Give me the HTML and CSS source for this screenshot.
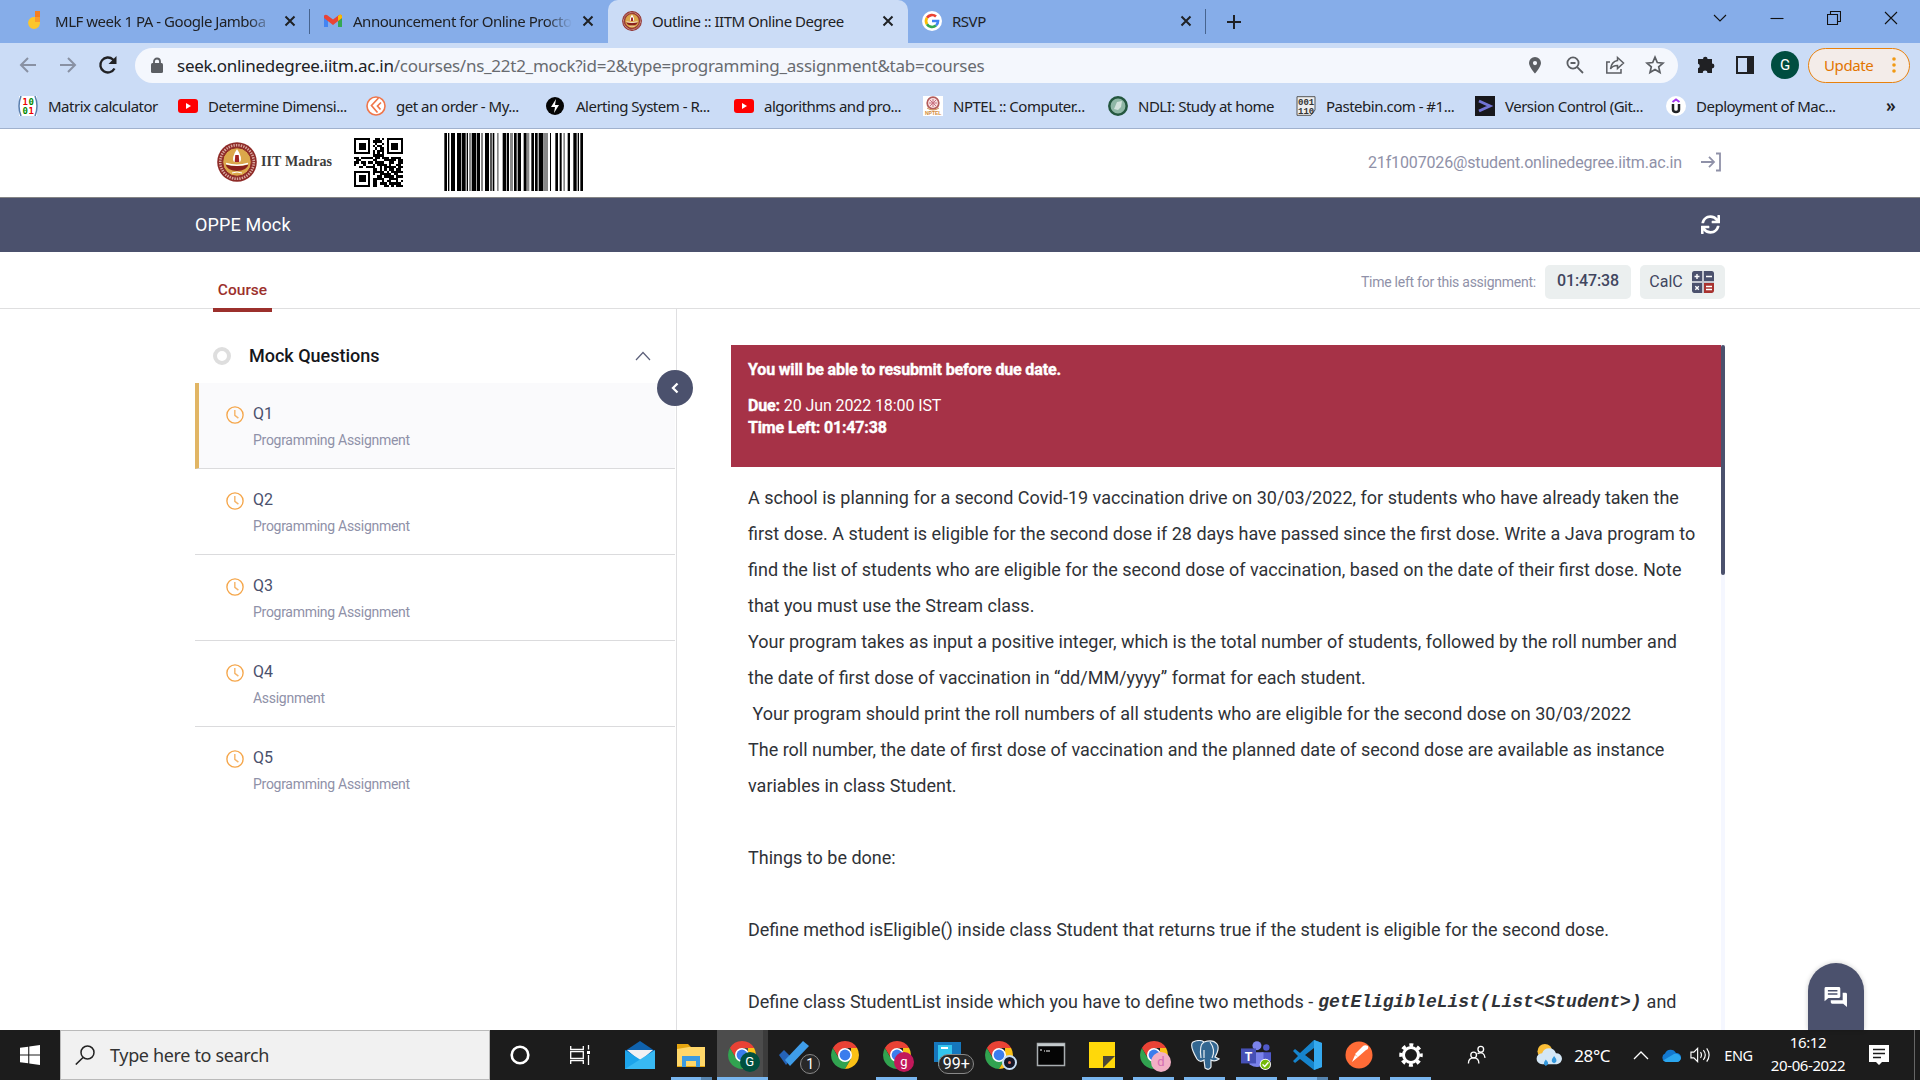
FILE: index.html
```html
<!DOCTYPE html>
<html lang="en">
<head>
<meta charset="utf-8">
<title>Outline :: IITM Online Degree</title>
<link rel="stylesheet" href="styles.css">
</head>
<body>
<svg width="0" height="0" class="defs" aria-hidden="true">
  <defs>
    <symbol id="close" viewBox="0 0 12 12"><path d="M1.5 1.5l9 9M10.5 1.5l-9 9" stroke="#1f2125" stroke-width="2"/></symbol>
    <symbol id="youtube" viewBox="0 0 20 20"><rect y="3" width="20" height="14" rx="3" fill="#f00"/><path d="M8 7l5 3-5 3z" fill="#fff"/></symbol>
    <symbol id="seal" viewBox="0 0 40 40"><circle cx="20" cy="20" r="19.8" fill="#8e2a27"/><circle cx="20" cy="20" r="16.8" fill="none" stroke="#d8a79f" stroke-width="2.6" stroke-dasharray="1.4 1.1"/><circle cx="20" cy="20" r="14.3" fill="#dba74b" stroke="#8e2a27"/><path d="M8.500 22.500q11.500 3 23 0q-2 6.500-11.500 6.500T8.500 22.500z" fill="#8a211c"/><path d="M9 21.500q11 3.500 22 0" fill="none" stroke="#fff" stroke-width="1.400"/><path d="M20 7q-6 9-3 13h6q3-4-3-13z" fill="#fff"/><path d="M18.300 13h3.400l.6 7h-4.600z" fill="#a02222"/><path d="M15 31q5-2 10 0" stroke="#fff" fill="none"/></symbol>
    <symbol id="chrome" viewBox="0 0 30 30"><path d="M15 1A14 14 0 0 1 27.200 8H15L9 18 2.900 8A14 14 0 0 1 15 1z" fill="#e94235"/><path d="M2.900 8A14 14 0 0 0 15 29l6-10.500L9 18.500z" fill="#31a350"/><path d="M27.100 8A14 14 0 0 1 15 29l6.100-10.500L21 8z" fill="#fbc116"/><circle cx="15" cy="15" r="7" fill="#fff"/><circle cx="15" cy="15" r="5.400" fill="#3b7ded"/></symbol>
    <symbol id="clock" viewBox="0 0 20 20"><circle cx="10" cy="10" r="9" fill="none" stroke="#f5a64a" stroke-width="1.500"/><path d="M9.800 4.500v6l4 3" fill="none" stroke="#f5b56a" stroke-width="1.600"/></symbol>
  </defs>
</svg>

<header class="browser">
  <div class="tabstrip">
    <div class="tab tab-a"><svg class="fav" viewBox="0 0 20 20"><path d="M10 0h5v10h-5z" fill="#f57f20"/><path d="M10 6v5h5a6 6 0 1 1-5-5z" fill="#fbc62c"/><path d="M10 6h5v5h-5z" fill="#fa9c2b"/></svg><span class="label fade">MLF week 1 PA - Google Jamboa</span><svg class="x"><use href="#close"/></svg></div>
    <i class="sep"></i>
    <div class="tab tab-b"><svg class="fav" viewBox="0 0 20 20"><path d="M1 4v12h4V8z" fill="#4285f4"/><path d="M19 4v12h-4V8z" fill="#34a853"/><path d="M1 5.500Q1 3 4 4l6 4.500L16 4q3-1 3 1.500L19 7l-9 7-9-7z" fill="#ea4335"/><path d="M15 5l2-1.400q2-.3 2 2V7l-4 3z" fill="#fbbc04"/></svg><span class="label fade">Announcement for Online Procto</span><svg class="x"><use href="#close"/></svg></div>
    <div class="tab active"><svg class="fav"><use href="#seal"/></svg><span class="label">Outline :: IITM Online Degree</span><svg class="x"><use href="#close"/></svg></div>
    <div class="tab tab-d"><svg class="fav" viewBox="0 0 20 20"><circle cx="10" cy="10" r="10" fill="#fff"/><g fill="none" stroke-width="2.700"><path d="M5 6.800A6 6 0 0 1 14 5.500" stroke="#ea4335"/><path d="M5 13.200a6 6 0 0 1 0-6.400" stroke="#fbbc05"/><path d="M14 14.500a6 6 0 0 1-9-1.300" stroke="#34a853"/><path d="M10 10h6q0 3-2 4.500" stroke="#4285f4"/></g></svg><span class="label">RSVP</span><svg class="x"><use href="#close"/></svg></div>
    <i class="sep"></i>
    <svg class="plus" viewBox="0 0 16 16"><path d="M8 1v14M1 8h14" stroke="#1f2125" stroke-width="2"/></svg>
    <div class="wincontrols">
      <svg viewBox="0 0 14 14"><path d="M1 4l6 6 6-6"/></svg>
      <svg viewBox="0 0 14 14"><path d="M.5 7.500h13"/></svg>
      <svg viewBox="0 0 14 14"><path d="M.5 3.500h10v10H.5zM3.500 3.500v-3h10v10h-3"/></svg>
      <svg viewBox="0 0 14 14"><path d="M1 1l12 12M13 1L1 13"/></svg>
    </div>
  </div>

  <div class="toolbar">
    <svg class="nav" viewBox="0 0 20 20"><path d="M18 10H3M10 3l-7 7 7 7" fill="none" stroke="#8991a3" stroke-width="2"/></svg>
    <svg class="nav" viewBox="0 0 20 20"><path d="M2 10h15M10 3l7 7-7 7" fill="none" stroke="#8991a3" stroke-width="2"/></svg>
    <svg class="nav" viewBox="0 0 20 20"><path d="M16.500 13.500A7.500 7.500 0 1 1 15 4.500l2 2" fill="none" stroke="#202124" stroke-width="2.300"/><path d="M18.500 1v8h-8z" fill="#202124"/></svg>
    <div class="omnibox">
      <svg class="lock" viewBox="0 0 12 16"><rect y="6" width="12" height="10" rx="1.500" fill="#5b5e63"/><path d="M3 7V4.500a3 3 0 0 1 6 0V7" fill="none" stroke="#5b5e63" stroke-width="1.800"/></svg>
      <span class="url"><b>seek.onlinedegree.iitm.ac.in</b>/courses/ns_22t2_mock?id=2&amp;type=programming_assignment&amp;tab=courses</span>
      <div class="actions">
        <svg viewBox="0 0 20 20"><path d="M10 2a6 6 0 0 0-6 6c0 4 6 10.500 6 10.500S16 12 16 8a6 6 0 0 0-6-6zm0 4a2 2 0 1 1 0 4.200A2 2 0 0 1 10 6z" fill="#5b5e63"/></svg>
        <svg viewBox="0 0 20 20"><g fill="none" stroke="#5b5e63" stroke-width="1.800"><circle cx="8" cy="8" r="5.600"/><path d="M5.500 8h5M12.200 12.200L18 18"/></g></svg>
        <svg viewBox="0 0 20 20"><g fill="none" stroke="#5b5e63" stroke-width="1.500"><path d="M5 7H1.800v11H16v-4"/><path d="M12.500 2.500L18.500 8l-6 5.500v-3q-5 0-7 3.500 1-7.500 7-8.500z"/></g></svg>
        <svg viewBox="0 0 20 20"><path d="M10 2.200l2.300 5.300 5.700.6-4.300 3.800 1.300 5.700-5-3-5 3 1.300-5.700L2 8.100l5.700-.6z" fill="none" stroke="#5b5e63" stroke-width="1.700"/></svg>
      </div>
    </div>
    <svg class="ext" viewBox="0 0 20 20"><path d="M7 4a2.300 2.300 0 0 1 4.600 0H16v4.600a2.400 2.400 0 0 1 0 4.800V18h-4.500a2.400 2.400 0 0 0-4.800 0H2v-4.700a2.400 2.400 0 0 0 0-4.600V4z" fill="#202124"/></svg>
    <svg class="panel" viewBox="0 0 18 18"><path d="M1 1h16v16H1z" fill="none" stroke="#202124" stroke-width="2"/><path d="M11 1h6v16h-6z" fill="#202124"/></svg>
    <span class="avatar">G</span>
    <span class="update">Update <svg viewBox="0 0 4 18"><circle cx="2" cy="3" r="1.800"/><circle cx="2" cy="9" r="1.800"/><circle cx="2" cy="15" r="1.800"/></svg></span>
  </div>

  <div class="bookmarks">
    <div><svg viewBox="0 0 20 20"><path d="M1 0h18v20H1z" fill="#fff"/><path d="M3 0Q-1 10 3 20M17 0q4 10 0 20" fill="none" stroke="#5a7fae" stroke-width="1.500"/><g class="matrix"><text x="4.500" y="8.500" fill="#e00">1</text><text x="10.500" y="8.500" fill="#080">0</text><text x="4.500" y="17.500" fill="#080">0</text><text x="10.500" y="17.500" fill="#e00">1</text></g></svg><span>Matrix calculator</span></div>
    <div><svg><use href="#youtube"/></svg><span>Determine Dimensi...</span></div>
    <div><svg viewBox="0 0 20 20"><circle cx="10" cy="10" r="9" fill="#fff" stroke="#f0764a" stroke-width="1.600"/><path d="M12.500 2L5.500 9.500l6 7M15 6.500l-3.500 3.500 3 3.500" fill="none" stroke="#f0764a" stroke-width="1.700"/></svg><span>get an order - My...</span></div>
    <div><svg viewBox="0 0 20 20"><circle cx="9" cy="10" r="9" fill="#050505"/><path d="M10 3l-5 8h4l-1 6 5-8H9z" fill="#fff"/></svg><span>Alerting System - R...</span></div>
    <div><svg><use href="#youtube"/></svg><span>algorithms and pro...</span></div>
    <div><svg viewBox="0 0 20 20"><path d="M0 0h20v20H0z" fill="#fff"/><circle cx="10" cy="7" r="5.800" fill="#f8dfe0" stroke="#b35c5c" stroke-width="1.700"/><path d="M10 3v8M6 7h8M7 4l6 6M13 4l-6 6" stroke="#c87180"/><path d="M4 12q6 4 12 0" stroke="#d09050" fill="none"/><text x="2" y="19" class="nptel">NPTEL</text></svg><span>NPTEL :: Computer...</span></div>
    <div><svg viewBox="0 0 20 20"><circle cx="10" cy="10" r="8.700" fill="#8fb7a6" stroke="#24573f" stroke-width="2.500"/><path d="M6 13l3-7 5-1-1 6-3 3z" fill="#d2e2dc"/></svg><span>NDLI: Study at home</span></div>
    <div><svg viewBox="0 0 20 20"><path d="M1 .7h18V14l-4 5.300H1z" fill="#eee" stroke="#555"/><text x="2" y="9" class="bits">001</text><text x="2" y="17.500" class="bits">110</text></svg><span>Pastebin.com - #1...</span></div>
    <div><svg viewBox="0 0 20 20"><path d="M0 0h20v20H0z" fill="#18181c"/><path d="M4 5l11 5-11 5" fill="none" stroke="#7274d4" stroke-width="2.800"/></svg><span>Version Control (Git...</span></div>
    <div><svg viewBox="0 0 20 20"><circle cx="10" cy="10" r="10" fill="#fff"/><path d="M6.500 6L10 3.500 13.500 6" fill="none" stroke="#a435f0" stroke-width="2"/><path d="M7 8v5.500q0 2.500 3 2.500t3-2.500V8" fill="none" stroke="#202124" stroke-width="2.500"/></svg><span>Deployment of Mac...</span></div>
    <b>»</b>
  </div>
</header>

<main class="page">
  <div class="brandbar">
    <svg class="seal"><use href="#seal"/></svg>
    <span class="brand">IIT Madras</span>
    <svg class="qr" id="qr" viewBox="0 0 21 21" shape-rendering="crispEdges"></svg>
    <svg class="barcode" id="barcode" viewBox="0 0 417 58" preserveAspectRatio="none"></svg>
    <span class="email">21f1007026@student.onlinedegree.iitm.ac.in</span>
    <svg class="logout" viewBox="0 0 20 20"><path d="M0 10h12M8 4.800l5 5.200-5 5.200M15 1.500h4v17h-4" fill="none" stroke="#8f91a8" stroke-width="1.800"/></svg>
  </div>
  <div class="titlebar">
    <span>OPPE Mock</span>
    <svg viewBox="0 0 512 512"><path fill="#fff" d="M440.650 12.570l4 82.770A247.160 247.160 0 0 0 255.830 8C134.730 8 33.910 94.920 12.290 209.820A12 12 0 0 0 24.090 224h49.050a12 12 0 0 0 11.670-9.260 175.910 175.910 0 0 1 317-56.940l-101.460-4.860a12 12 0 0 0-12.570 12v47.410a12 12 0 0 0 12 12H500a12 12 0 0 0 12-12V12a12 12 0 0 0-12-12h-47.370a12 12 0 0 0-11.980 12.570zM255.830 432a175.610 175.610 0 0 1-146-77.800l101.800 4.870a12 12 0 0 0 12.570-12v-47.400a12 12 0 0 0-12-12H12a12 12 0 0 0-12 12V500a12 12 0 0 0 12 12h47.350a12 12 0 0 0 12-12.600l-4.150-82.570A247.170 247.170 0 0 0 255.830 504c121.110 0 221.930-86.920 243.550-201.820a12 12 0 0 0-11.800-14.180h-49.050a12 12 0 0 0-11.670 9.260A175.860 175.860 0 0 1 255.830 432z"/></svg>
  </div>
  <div class="coursebar">
    <span class="course">Course</span>
    <span class="timelabel">Time left for this assignment:</span>
    <span class="pill time">01:47:38</span>
    <span class="pill calc">CalC <svg viewBox="0 0 22 22"><path d="M0 0h22v22H0z" fill="#c3c6cf"/><path d="M2 0h8v10H0V2q0-2 2-2zM12 0h8q2 0 2 2v8H12zM0 12h10v10H2q-2 0-2-2z" fill="#4b516d"/><path d="M12 12h10v8q0 2-2 2h-8z" fill="#a8322f"/><path d="M5 3v5M2.500 5.500h5M14 5.500h6M3.300 15.300l3.500 3.500M6.800 15.300l-3.500 3.500M14 15.500h6M14 18.500h6" stroke="#fff" stroke-width="1.400"/></svg></span>
  </div>

  <div class="columns">
    <aside class="outline">
      <div class="section"><i class="ring"></i><span>Mock Questions</span><svg viewBox="0 0 16 10"><path d="M1 9l7-7.500L15 9" fill="none" stroke="#5c607a" stroke-width="1.200"/></svg></div>
      <div class="item selected"><svg><use href="#clock"/></svg><div><p>Q1</p><small>Programming Assignment</small></div></div>
      <div class="item"><svg><use href="#clock"/></svg><div><p>Q2</p><small>Programming Assignment</small></div></div>
      <div class="item"><svg><use href="#clock"/></svg><div><p>Q3</p><small>Programming Assignment</small></div></div>
      <div class="item"><svg><use href="#clock"/></svg><div><p>Q4</p><small>Assignment</small></div></div>
      <div class="item"><svg><use href="#clock"/></svg><div><p>Q5</p><small>Programming Assignment</small></div></div>
      <button class="collapse" aria-label="Collapse"><svg viewBox="0 0 10 12"><path d="M7.500 1.500L3 6l4.500 4.500" fill="none" stroke="#fff" stroke-width="2.300"/></svg></button>
    </aside>
    <section class="content">
      <div class="scroller">
        <div class="banner">
          <p class="notice"><b>You will be able to resubmit before due date.</b></p>
          <p><b>Due:</b> 20 Jun 2022 18:00 IST</p>
          <p><b>Time Left: 01:47:38</b></p>
        </div>
        <div class="question">
          <p>A school is planning for a second Covid-19 vaccination drive on 30/03/2022, for students who have already taken the
first dose. A student is eligible for the second dose if 28 days have passed since the first dose. Write a Java program to
find the list of students who are eligible for the second dose of vaccination, based on the date of their first dose. Note
that you must use the Stream class.</p>
          <p>Your program takes as input a positive integer, which is the total number of students, followed by the roll number and
the date of first dose of vaccination in “dd/MM/yyyy” format for each student.</p>
          <p> Your program should print the roll numbers of all students who are eligible for the second dose on 30/03/2022</p>
          <p class="gap">The roll number, the date of first dose of vaccination and the planned date of second dose are available as instance
variables in class Student.</p>
          <p class="gap">Things to be done:</p>
          <p class="gap">Define method isEligible() inside class Student that returns true if the student is eligible for the second dose.</p>
          <p class="mixed"><span>Define class StudentList inside which you have to define two methods -</span><code>getEligibleList(List&lt;Student&gt;)</code><span>and</span></p>
        </div>
      </div>
      <div class="track"><i></i></div>
    </section>
    <button class="chat" aria-label="Chat"><svg viewBox="0 0 24 22"><path d="M1.500 0H15q1.500 0 1.500 1.500V10q0 1.500-1.500 1.500H4L0 15V1.500Q0 0 1.500 0z" fill="#fff"/><path d="M19 6h3q1.500 0 1.500 1.500V21l-4-3.500H8Q6.500 17.500 6.500 16v-2H19z" fill="#fff"/><path d="M3.500 4h10M3.500 7.300h10" stroke="#4b516d" stroke-width="1.500"/></svg></button>
  </div>
</main>

<footer class="taskbar">
  <svg class="start" viewBox="0 0 20 20"><path d="M0 2.800l8.200-1.100v7.700H0zM9.300 1.500L20 0v9.400H9.300zM0 10.500h8.200v7.800L0 17.200zM9.300 10.500H20V20L9.300 18.500z" fill="#fff"/></svg>
  <div class="search"><svg viewBox="0 0 20 20"><circle cx="12.500" cy="7.500" r="6.500" fill="none" stroke="#222" stroke-width="1.500"/><path d="M8 12.500L.8 19.500" stroke="#222" stroke-width="1.600"/></svg><span>Type here to search</span></div>
  <div class="sys"><svg viewBox="0 0 20 20"><circle cx="10" cy="10" r="8.300" fill="none" stroke="#fff" stroke-width="2.600"/></svg></div>
  <div class="sys"><svg viewBox="0 0 20 20"><path d="M.7 1v3.300h12.600V1M.7 19v-3.300h12.600V19M.7 6.500h12.600v7H.7zM18.500 0v4.500M18.500 10v10" fill="none" stroke="#fff" stroke-width="1.300"/><path d="M17 6h3v3h-3z" fill="#fff"/></svg></div>
  <div class="apps">
    <div><svg viewBox="0 0 30 30"><path d="M0 11L15 1l15 10v18H0z" fill="#0f62ad"/><path d="M2 10h26L15 21z" fill="#f1f1f3"/><path d="M0 10l30 19H0z" fill="#1ca4eb"/><path d="M30 10L0 29h30z" fill="#38b9f3"/></svg></div>
    <div class="run split"><svg viewBox="0 0 30 30"><path d="M1 4h11l3 3h14v20H1z" fill="#e5a50f"/><path d="M1 9l12-2h16v19H1z" fill="#ffd769"/><path d="M6 27V16h18v11h-4v-6H10v6z" fill="#3c9be0"/></svg></div>
    <div class="run current"><svg><use href="#chrome"/></svg><b class="badge green">G</b></div>
    <div><svg viewBox="0 0 30 30"><path d="M0 15l5-5 8 8-6 7z" fill="#2563b8"/><path d="M6 20L24 1l6 5-19 20z" fill="#3f9de9"/></svg><b class="badge num">1</b></div>
    <div><svg><use href="#chrome"/></svg></div>
    <div class="run"><svg><use href="#chrome"/></svg><b class="badge pink">g</b></div>
    <div><svg viewBox="0 0 30 30"><path d="M1 2h27v20H1z" fill="#1677bd"/><path d="M5 5h14v21H5z" fill="#32c5ef"/><path d="M8 8h7" stroke="#fff" stroke-width="2"/></svg><b class="badge many">99+</b></div>
    <div><svg><use href="#chrome"/></svg><b class="badge dark"><i></i></b></div>
    <div><svg viewBox="0 0 30 30"><path d="M1.500 3.500h27v22h-27z" fill="#050505" stroke="#a8adb0" stroke-width="1.500"/><path d="M1.500 5h27" stroke="#c4cacc" stroke-width="2.500"/><path d="M4 10h2M8 11h1M10 11h4" stroke="#fff"/></svg></div>
    <div class="run"><svg viewBox="0 0 30 30"><path d="M2 2h26v26H2z" fill="#ffd80a"/><path d="M16 28V16h12z" fill="#4a4637"/></svg></div>
    <div class="run"><svg><use href="#chrome"/></svg><b class="badge rose">d</b></div>
    <div class="run"><svg viewBox="0 0 30 30"><path d="M3 2q7-3 11 0 9-3 13 2 3 4-2 13l4 2q-4 3-8 1v7q-2 4-6 1l-1-8q-4 3-7-1Q-1 5 3 2z" fill="#336791" stroke="#e8eef2" stroke-width="1.200"/><path d="M14 2q-5 3-3 16M20 2q6 8 2 16M14 10v8" fill="none" stroke="#e8eef2" stroke-width="1.200"/></svg></div>
    <div class="run"><svg class="teams" viewBox="0 0 32 30"><circle cx="17" cy="5" r="4.800" fill="#7b83eb"/><circle cx="27" cy="7" r="3.400" fill="#5059c9"/><path d="M22 12h10v9q-4 6-10 2z" fill="#5059c9"/><path d="M9 12h15v12q-5 7-15 1z" fill="#7b83eb"/><path d="M0 8h16v16H0z" fill="#4650b5"/><text x="4" y="21" class="teams-t">T</text><circle cx="26" cy="25" r="6" fill="#fff"/><circle cx="26" cy="25" r="5" fill="#75b80b"/><path d="M23 25l2.300 2.300 4-4.500" fill="none" stroke="#fff" stroke-width="1.500"/></svg></div>
    <div class="run split"><svg viewBox="0 0 30 30"><path d="M21 0L7 13 2 9 0 11l5 5-5 5 2 2 5-4 14 11 8-3V3zM21 8v14l-9-7z" fill="#1684cc"/><path d="M21 0l8 3v24l-8 3z" fill="#35a9ef"/></svg></div>
    <div class="run"><svg viewBox="0 0 30 30"><circle cx="15" cy="15" r="13.500" fill="#ff6c37"/><path d="M24 6q-4-2-6 1l-7 7 3 3 8-7q3-1 2-4zM11 15l-3 7 6-5" fill="#fff"/></svg></div>
    <div class="run"><svg viewBox="0 0 30 30"><circle cx="15" cy="15" r="10" fill="none" stroke="#fff" stroke-width="3.500" stroke-dasharray="3.930 3.930" stroke-dashoffset="2"/><circle cx="15" cy="15" r="7.500" fill="none" stroke="#fff" stroke-width="3"/></svg></div>
  </div>
  <svg class="people" viewBox="0 0 20 20"><g fill="none" stroke="#fff" stroke-width="1.400"><circle cx="7" cy="10" r="3"/><circle cx="14.500" cy="4" r="3"/><path d="M1.500 19q0-6 5.500-6t5.500 6M11 8.500q7-3 8 4.500"/></g></svg>
  <svg class="weather" viewBox="0 0 28 26"><circle cx="9" cy="9" r="8" fill="#f9bd37"/><path d="M6 23a6 6 0 0 1 0-12 8 8 0 0 1 15 0 6 6 0 0 1 1 12z" fill="#d4e7f6"/><path d="M10 18q5 5 0 7-4-2 0-7zM19 14q5 6 0 8-5-2 0-8z" fill="#3197dd"/></svg>
  <span class="temp">28°C</span>
  <svg class="up" viewBox="0 0 16 9"><path d="M1 8l7-7 7 7" fill="none" stroke="#fff" stroke-width="1.300"/></svg>
  <svg class="cloud" viewBox="0 0 20 13"><path d="M5 13a4.500 4.500 0 0 1-1-8.500 6 6 0 0 1 11-.5 4.500 4.500 0 0 1 1 9z" fill="#1379d0"/><path d="M2 11.500L13 5q5-1 7 4-1 4-4 4H5z" fill="#2ba6ee"/></svg>
  <svg class="speaker" viewBox="0 0 22 16"><path d="M1 5h3l4-4v14l-4-4H1zM11 5q2 3 0 6M14 3q4 5 0 10M17.500 1q5 7 0 14" fill="none" stroke="#fff" stroke-width="1.200"/></svg>
  <span class="lang">ENG</span>
  <div class="datetime"><span>16:12</span><span>20-06-2022</span></div>
  <svg class="notify" viewBox="0 0 20 20"><path d="M0 0h20v17h-7l-3 3-3-3H0z" fill="#fff"/><path d="M4 4.500h12M4 8.500h12M4 12.500h8" stroke="#1c1c1c" stroke-width="1.400"/></svg>
  <i class="peek"></i>
</footer>
<script src="codes.js"></script>
</body>
</html>
```
FILE: styles.css
```css
* { box-sizing: border-box; }
body { margin: 0; width: 1920px; height: 1080px; overflow: hidden; display: flex; flex-direction: column; background: #fff; font-family: Roboto, sans-serif; }
p { margin: 0; }
svg { flex: none; display: block; }
button { border: 0; padding: 0; }
.defs { position: absolute; }

/* browser chrome */
.browser { height: 129px; flex: none; background: #cbdcf6; border-bottom: 1px solid #a0b1cd; font-family: "Noto Sans", sans-serif; color: #202124; }
.tabstrip { height: 43px; background: #86ade9; display: flex; align-items: center; font-size: 15px; }
.tab { display: flex; align-items: center; height: 43px; padding-right: 13px; padding-bottom: 2px; white-space: nowrap; letter-spacing: -0.48px; }
.tab .fav { width: 20px; height: 20px; margin-right: 10px; }
.tab .label { flex: 1; }
.tab .x { width: 12px; height: 12px; margin-left: 10px; }
.fade { mask-image: linear-gradient(90deg, #000 88%, transparent); }
.tab-a { width: 309px; padding-left: 25px; }
.tab-b { width: 298px; padding-left: 13px; padding-right: 14px; }
.tab.active { width: 300px; padding-left: 14px; padding-right: 14px; background: #cbdcf6; border-radius: 10px 10px 0 0; }
.tab-d { width: 297px; padding-left: 14px; }
.sep { width: 1px; height: 25px; background: #47648f; }
.plus { width: 16px; height: 16px; margin-left: 20px; }
.wincontrols { display: flex; gap: 43px; margin-left: auto; margin-right: 22px; padding-bottom: 7px; }
.wincontrols svg { width: 14px; height: 14px; fill: none; stroke: #111; stroke-width: 1.1; }
.toolbar { height: 44px; display: flex; align-items: center; padding-left: 18px; }
.nav { width: 20px; height: 20px; margin-right: 20px; }
.omnibox { width: 1543px; height: 35px; border-radius: 18px; background: #f4f7fd; margin-left: -3px; display: flex; align-items: center; padding: 0 13px 0 16px; }
.lock { width: 12px; height: 16px; }
.url { margin-left: 14px; font-size: 17px; letter-spacing: -0.26px; color: #686b70; white-space: nowrap; }
.url b { font-weight: 400; color: #202124; }
.actions { margin-left: auto; display: flex; gap: 20px; }
.actions svg { width: 20px; height: 20px; }
.ext { width: 20px; height: 20px; margin-left: 18px; }
.panel { width: 18px; height: 18px; margin-left: 20px; }
.avatar { width: 28px; height: 28px; border-radius: 50%; background: #004d40; color: #fff; font: 15px/28px Roboto, sans-serif; text-align: center; margin-left: 17px; }
.update { width: 102px; height: 35px; margin-left: 9px; border: 1.5px solid #e8810c; border-radius: 18px; background: #f3ece9; color: #e27500; font-size: 15px; letter-spacing: -0.4px; display: flex; align-items: center; justify-content: space-between; padding: 0 13px 0 15px; }
.update svg { width: 4px; height: 18px; fill: #f19a14; }
.bookmarks { height: 37px; display: grid; align-items: center; grid-template-columns: 160px 188px 180px 188px 189px 185px 188px 179px 191px 220px 20px; padding-left: 18px; font-size: 15px; letter-spacing: -0.5px; }
.bookmarks div { display: flex; align-items: center; gap: 10px; white-space: nowrap; }
.bookmarks svg { width: 20px; height: 20px; }
.bookmarks b { font-size: 17px; font-weight: 600; }
.matrix text { font: bold 9px "DejaVu Sans Mono", monospace; letter-spacing: 0; }
.nptel { font: bold 5px "Liberation Sans", sans-serif; fill: #d28a3a; letter-spacing: 0; }
.bits { font: bold 9px "Liberation Mono", monospace; fill: #333; letter-spacing: 0; }

/* course page */
.page { flex: 1; min-height: 0; display: flex; flex-direction: column; }
.brandbar { height: 69px; flex: none; border-bottom: 1px solid #858585; display: flex; align-items: center; padding: 0 199px 2px 217px; }
.seal { width: 40px; height: 40px; }
.brand { width: 93px; margin-left: 4px; font: bold 14px "Liberation Serif", serif; color: #3c3c3c; letter-spacing: 0.1px; }
.qr { width: 49px; height: 49px; }
.barcode { width: 139px; height: 58px; margin-left: 41px; }
.email { margin-left: auto; font-size: 16px; letter-spacing: -0.15px; color: #8f91a8; }
.logout { width: 20px; height: 20px; margin-left: 19px; }
.titlebar { height: 54px; flex: none; background: #4b516d; color: #fff; display: flex; align-items: center; justify-content: space-between; padding: 0 200px 2px 195px; font-size: 18px; letter-spacing: 0.15px; }
.titlebar svg { width: 19px; height: 19px; }
.coursebar { height: 57px; flex: none; border-bottom: 1px solid #dfdfe0; display: flex; align-items: center; padding: 0 195px 0 213px; color: #41465f; }
.course { width: 59px; height: 60px; align-self: flex-start; border-bottom: 4px solid #9c302c; color: #9c302c; font-size: 15.5px; font-weight: 500; line-height: 77px; text-align: center; }
.timelabel { margin-left: auto; font-size: 14px; letter-spacing: -0.25px; color: #8f91a8; padding-top: 3px; }
.pill { height: 34px; margin-top: 3px; border-radius: 5px; background: #ebefef; font-size: 16px; display: flex; align-items: center; justify-content: center; align-self: center; }
.time { width: 86px; margin-left: 9px; font-weight: 500; padding-bottom: 2px; letter-spacing: -0.1px; }
.calc { width: 85px; margin-left: 9px; gap: 9px; padding-right: 2px; }
.calc svg { width: 22px; height: 22px; border-radius: 2px; }
.columns { flex: 1; min-height: 0; display: flex; position: relative; padding-left: 195px; }
.outline { width: 482px; border-right: 1px solid #dfdfe1; padding-right: 1px; position: relative; }
.section { height: 74px; padding: 20px 24px 0 18px; display: flex; align-items: center; font-size: 18px; font-weight: 500; color: #15161b; }
.section span { margin: 0 auto 1px 18px; }
.section svg { width: 16px; height: 10px; }
.ring { width: 18px; height: 18px; border: 4px solid #dedede; border-radius: 50%; }
.item { height: 86px; border-bottom: 1px solid #dbdbdd; padding: 22px 0 0 31px; display: flex; gap: 9px; }
.item:nth-child(6) { border-bottom: 0; }
.item.selected { background: #fafafc; border-left: 4px solid #e1b564; padding-left: 27px; }
.item svg { width: 18px; height: 18px; margin-top: 1px; }
.item p { font-size: 16px; line-height: 18px; color: #4b516d; letter-spacing: -0.1px; }
.item small { display: block; font-size: 14px; line-height: 18px; margin-top: 8px; color: #8f91a8; letter-spacing: -0.28px; }
.collapse { position: absolute; right: -17px; top: 61px; width: 36px; height: 36px; border-radius: 50%; background: #4b516d; display: grid; place-items: center; }
.collapse svg { width: 10px; height: 12px; }
.content { display: flex; width: 994px; margin-left: 54px; padding-top: 36px; }
.scroller { width: 990px; overflow: hidden; }
.banner { height: 122px; background: #a63247; color: #fff; font-size: 16px; line-height: 22px; padding: 14px 17px; letter-spacing: -0.1px; }
.banner b { letter-spacing: -0.15px; -webkit-text-stroke: 0.4px #fff; }
.notice { margin-bottom: 14px; }
.question { padding: 13px 17px 0; font-size: 18px; line-height: 36px; color: #2f3237; }
.question p { white-space: pre; }
.question .gap { margin-bottom: 36px; }
.question .mixed { display: flex; gap: 5px; }
.question code { font: italic bold 18px/36px "Courier New", "Liberation Mono", monospace; letter-spacing: -0.02px; }
.track { width: 4px; background: #f5f7ff; }
.track i { display: block; height: 230px; border-radius: 2px; background: #4b516d; }
.chat { position: absolute; left: 1808px; bottom: 0; width: 56px; height: 67px; border-radius: 28px 28px 0 0; background: #4b516d; padding: 24px 16px; box-shadow: 0 0 5px #0003; }
.chat svg { width: 24px; height: 21px; }

/* Windows taskbar */
.taskbar { height: 50px; flex: none; background: #1c1c1c; color: #fff; display: flex; align-items: center; font-family: "Noto Sans", sans-serif; padding-right: 5px; }
.start { width: 20px; height: 20px; margin: 0 20px; }
.search { width: 430px; height: 50px; background: #f1f1f1; border: 1px solid #bababa; color: #333; display: flex; align-items: center; gap: 15px; padding-left: 14px; font-size: 18px; letter-spacing: -0.35px; }
.search svg { width: 20px; height: 20px; }
.sys { width: 60px; display: grid; place-items: center; }
.sys svg { width: 20px; height: 20px; }
.apps { display: flex; margin-left: 4px; }
.apps div { width: 51.4px; height: 50px; display: grid; place-items: center; position: relative; }
.apps svg { width: 30px; height: 30px; }
.apps .run { background: linear-gradient(#78b5ee, #78b5ee) no-repeat 50% 100% / 41px 3px; }
.apps .run.split { background: linear-gradient(90deg, #78b5ee 73%, #5684ae 73%) no-repeat 50% 100% / 41px 3px; }
.apps .run.current { background: linear-gradient(#78b5ee, #78b5ee) no-repeat 50% 100% / 100% 3px, linear-gradient(90deg, #4c4c4c 91%, #3c3c3c 91%); }
.badge { position: absolute; left: 23px; top: 22px; width: 20px; height: 20px; border-radius: 50%; font: 13px/20px Roboto, sans-serif; text-align: center; }
.green { background: #00503f; }
.pink { background: #c2185b; }
.rose { background: #f2afc5; color: #d46db2; }
.dark { left: 28px; top: 25px; width: 15px; height: 15px; background: #141728; border: 2px solid #c6def5; display: grid; place-items: center; }
.dark i { width: 3px; height: 3px; border-radius: 50%; background: #e86d5b; }
.num, .many { left: 32px; top: 24px; border: 1px solid #888; background: #282828; font-size: 14px; line-height: 18px; }
.many { left: 16px; width: 36px; border-radius: 10px; font-size: 16px; }
.teams-t { font: bold 13px Roboto, sans-serif; fill: #fff; }
.people { width: 19px; height: 20px; margin-left: 31px; }
.weather { width: 27px; height: 24px; margin-left: 50px; }
.temp { width: 59px; margin-left: 11px; font-size: 17px; letter-spacing: -0.4px; }
.up { width: 16px; height: 9px; }
.cloud { width: 20px; height: 13px; margin-left: 12px; }
.speaker { width: 21px; height: 16px; margin-left: 9px; }
.lang { margin-left: 13px; font-size: 14.5px; letter-spacing: -0.4px; }
.datetime { width: 86px; margin-left: auto; margin-right: 18px; display: flex; flex-direction: column; align-items: center; font-size: 15px; line-height: 23px; letter-spacing: -0.4px; padding-bottom: 2px; }
.notify { width: 20px; height: 20px; }
.peek { width: 1px; height: 50px; margin-left: 25px; background: #666; }
```
FILE: codes.js
```js
const NS = "http://www.w3.org/2000/svg";
function rect(parent, x, y, w, h, fill) {
  const r = document.createElementNS(NS, "rect");
  Object.entries({ x, y, width: w, height: h, fill }).forEach(([k, v]) => r.setAttribute(k, v));
  parent.appendChild(r);
}
const modules = [
  "111111100110101111111", "100000101111001000001", "101110100100101011101",
  "101110101011001011101", "101110100101101011101", "100000101011101000001",
  "111111101010101111111", "000000001111100000000", "110111110110111011110",
  "011000001100011111011", "110110110111100110011", "100010001011110100110",
  "001101111001011111011", "000000001101010110110", "111111101111101011111",
  "100000101001111101100", "101110100011011110111", "101110101111100111100",
  "101110101100101100101", "100000101101110111110", "111111101100011010111"
];
const qr = document.getElementById("qr");
modules.forEach((row, y) => [...row].forEach((m, x) => { if (m === "1") rect(qr, x, y, 1, 1, "#000"); }));

/* start, end, shade */
const bars = [[1,9],[12,16],[21,33],[39,51],[53,65],[68,72],[75,83,1],[84,96],[98,108],[111,117,1],[123,135],[139,143],[146,151],[159,164,1],[176,186],[188,195],[198,207,1],[210,218],[221,231],[239,248],[248,256,1],[262,270],[273,281],[284,298],[298,312,1],[318,321],[334,342],[347,353],[358,363,1],[371,378],[388,398],[401,405],[409,417]];
const bc = document.getElementById("barcode");
bars.forEach(([a, b, g]) => rect(bc, a, 0, b - a, 58, g ? "#888" : "#000"));
```
